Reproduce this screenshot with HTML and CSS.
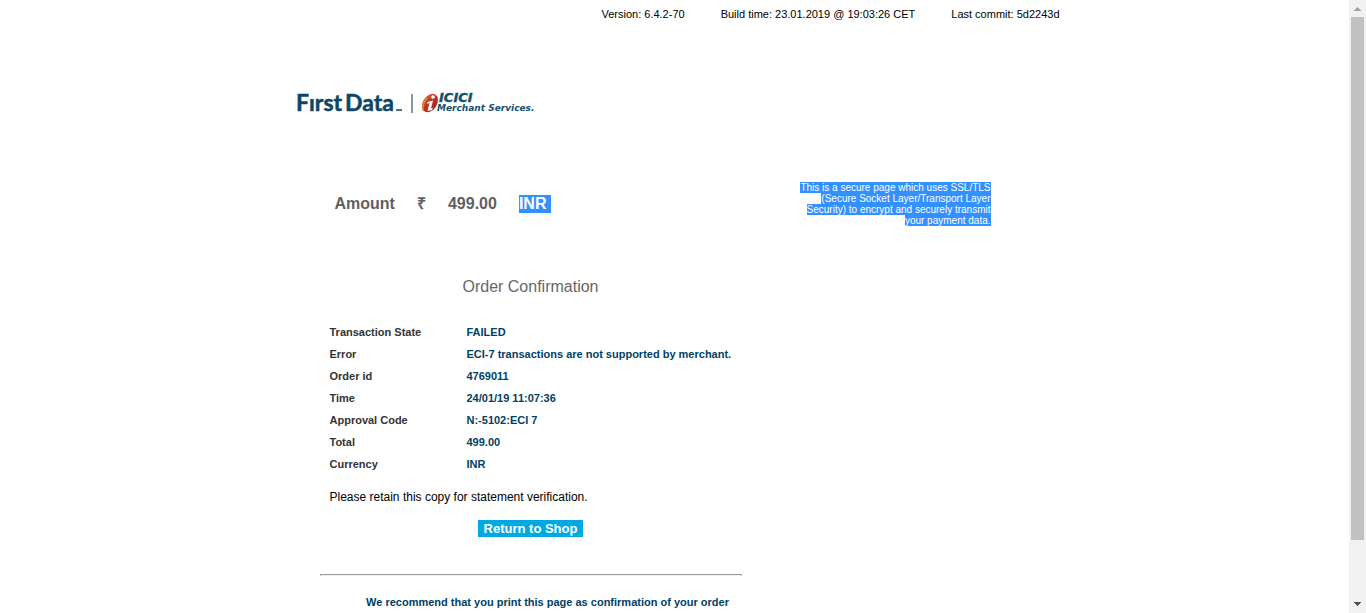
FILE: index.html
```html
<!DOCTYPE html>
<html lang="en">
<head>
<meta charset="utf-8">
<title>Order Confirmation</title>
<link rel="stylesheet" href="styles.css">
</head>
<body>
<div class="window">
  <div class="page">
    <div class="container">
      <div class="build">
        <span>Version: 6.4.2-70</span>
        <span>Build time: 23.01.2019 @ 19:03:26 CET</span>
        <span>Last commit: 5d2243d</span>
      </div>
      <header class="brand">
        <svg class="logo" width="246" height="36" viewBox="0 -4 246 36" role="img" aria-label="First Data, ICICI Merchant Services">
          <defs>
            <linearGradient id="flame" x1="0" y1="0" x2="1" y2="0.4">
              <stop offset="0" stop-color="#d9722c"/>
              <stop offset="0.45" stop-color="#c03a26"/>
              <stop offset="1" stop-color="#a82a24"/>
            </linearGradient>
          </defs>
          <text class="logo-first" y="22"><tspan x="4">First</tspan> <tspan x="53">Data</tspan></text>
          <rect x="17" y="3" width="6" height="7" fill="#fff"/>
          <rect x="104" y="20" width="6" height="2" fill="#4b7389"/>
          <rect x="119" y="5" width="2" height="19" fill="#7d9cac"/>
          <g transform="translate(138 14) rotate(32)">
            <ellipse rx="7" ry="10" fill="url(#flame)"/>
          </g>
          <path d="M131 22q-1-7 4-13" fill="none" stroke="#e58a3a" stroke-width="1.5"/>
          <circle cx="141" cy="8" r="1.8" fill="#fff"/>
          <path d="M135.500 13l5.500-1.500-2 8 2-.5-1 2-4.500 1 2-8-2.500.8z" fill="#fff"/>
          <text class="logo-icici" x="147" y="13">ICICI</text>
          <text class="logo-merchant" x="145" y="22">Merchant Services.</text>
        </svg>
      </header>
      <div class="summary">
        <div class="amount">
          <span class="amount-label">Amount</span>
          <span class="amount-sign">₹</span>
          <span class="amount-value">499.00</span>
          <span class="selected">INR </span>
        </div>
        <p class="secure"><span class="selected">This is a secure page which uses SSL/TLS<br>(Secure Socket Layer/Transport Layer<br>Security) to encrypt and securely transmit<br>your payment data.</span></p>
      </div>
      <main class="order">
        <h1 class="title">Order Confirmation</h1>
        <table class="details">
          <tr><th scope="row">Transaction State</th><td>FAILED</td></tr>
          <tr><th scope="row">Error</th><td>ECI-7 transactions are not supported by merchant.</td></tr>
          <tr><th scope="row">Order id</th><td>4769011</td></tr>
          <tr><th scope="row">Time</th><td>24/01/19 11:07:36</td></tr>
          <tr><th scope="row">Approval Code</th><td>N:-5102:ECI 7</td></tr>
          <tr><th scope="row">Total</th><td>499.00</td></tr>
          <tr><th scope="row">Currency</th><td>INR</td></tr>
        </table>
        <p class="retain">Please retain this copy for statement verification.</p>
        <button class="return" type="button">Return to Shop</button>
        <hr class="rule">
        <p class="print">We recommend that you print this page as confirmation of your order</p>
      </main>
    </div>
  </div>
  <div class="scrollbar" aria-hidden="true">
    <svg class="arrow" width="17" height="17" viewBox="0 0 17 17" shape-rendering="crispEdges"><path d="M5 11h7v-1h-1v-1h-1v-1h-1v-1h-1v1h-1v1h-1v1h-1z" fill="#a3a3a3"/></svg>
    <div class="track"><div class="thumb"></div></div>
    <svg class="arrow" width="17" height="17" viewBox="0 0 17 17" shape-rendering="crispEdges"><path d="M5 6h7v1h-1v1h-1v1h-1v1h-1v-1h-1v-1h-1v-1h-1z" fill="#505050"/></svg>
  </div>
</div>
</body>
</html>
```
FILE: styles.css
```css
body {
  margin: 0;
  background: #fff;
  color: #000;
  font-family: "Liberation Sans", Arial, sans-serif;
  font-size: 11px;
}

.window {
  display: flex;
  height: 100vh;
  overflow: hidden;
}

.page {
  flex: 1;
  overflow: hidden;
}

.container {
  max-width: 770px;
  margin: 0 auto;
}

.build {
  display: flex;
  justify-content: flex-end;
  gap: 36px;
  padding-top: 8px;
  line-height: 13px;
}

.brand {
  padding: 64px 0 0 2px;
}

.logo {
  display: block;
}

.logo-first {
  font: 700 23px Lato, sans-serif;
  fill: #0b4668;
  stroke: #0b4668;
  stroke-width: 0.5px;
}

.logo-icici {
  font: italic 700 13px "DejaVu Sans", Verdana, sans-serif;
  fill: #14506b;
  stroke: #14506b;
  stroke-width: 0.4px;
}

.logo-merchant {
  font: italic 700 9px "DejaVu Sans", Verdana, sans-serif;
  fill: #14506b;
}

.summary {
  display: flex;
  justify-content: space-between;
  padding: 61px 69px 0 45px;
}

.amount {
  display: flex;
  align-items: flex-start;
  padding-top: 13px;
  color: #5f5f5f;
  font-size: 16px;
  font-weight: 700;
  line-height: 18px;
}

.amount-label,
.amount-sign,
.amount-value {
  margin-right: 22px;
}

.amount .selected {
  white-space: pre;
}

.selected {
  background: #3390ff;
  color: #fff;
}

.secure {
  margin: 0;
  font-size: 10px;
  line-height: 11px;
  text-align: right;
}

.order {
  width: 422px;
  margin-left: 30px;
}

.title {
  margin: 52px 0 25px;
  color: #666;
  font-size: 16px;
  font-weight: 400;
  line-height: 18px;
  text-align: center;
}

.details {
  margin-left: 10px;
  border-collapse: collapse;
  line-height: 22px;
  text-align: left;
}

.details th {
  width: 137px;
  padding: 0;
  color: #333;
}

.details td {
  padding: 0;
  color: #003f66;
  font-weight: 700;
}

.retain {
  margin: 14px 0 15px 10px;
  font-size: 12px;
  line-height: 16px;
}

.return {
  display: block;
  margin: 0 auto;
  padding: 0 6px;
  border: 0;
  background: #00aae1;
  color: #fff;
  font: 700 13px/17px "Liberation Sans", Arial, sans-serif;
}

.rule {
  margin: 37px 0 19px;
  border: 1px solid #999;
  border-bottom-color: #eee;
}

.print {
  margin: 0;
  padding-left: 34px;
  color: #003f66;
  font-weight: 700;
  line-height: 14px;
  text-align: center;
}

.scrollbar {
  display: flex;
  flex-direction: column;
  width: 17px;
  background: #f1f1f1;
}

.arrow {
  flex: none;
}

.track {
  flex: 1;
  padding: 0 2px;
}

.thumb {
  height: calc(100% - 56px);
  background: #c1c1c1;
}
```
